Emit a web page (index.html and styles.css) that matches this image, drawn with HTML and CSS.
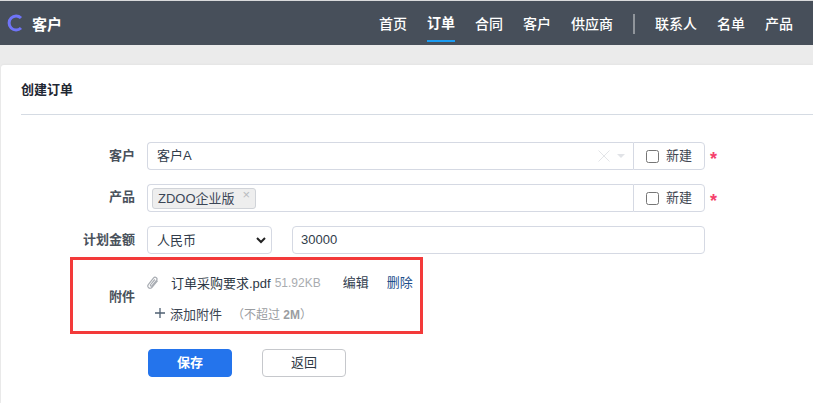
FILE: index.html
```html
<!DOCTYPE html>
<html lang="zh">
<head>
<meta charset="utf-8">
<title>创建订单</title>
<link rel="stylesheet" href="styles.css">
</head>
<body>
<header class="navbar">
  <div class="brand">
    <svg class="logo" width="16" height="18" viewBox="0 0 16 18"><path d="M14 4A7 7 0 1 0 14 14" fill="none" stroke="#6f74f8" stroke-width="3"/></svg>
    <span class="brand-name">客户</span>
  </div>
  <nav class="nav">
    <a class="nav-item">首页</a>
    <a class="nav-item active">订单</a>
    <a class="nav-item">合同</a>
    <a class="nav-item">客户</a>
    <a class="nav-item">供应商</a>
    <span class="nav-divider"></span>
    <a class="nav-item">联系人</a>
    <a class="nav-item">名单</a>
    <a class="nav-item">产品</a>
  </nav>
</header>
<main class="content">
  <section class="card">
    <h1 class="card-title">创建订单</h1>
    <form class="form">
      <div class="row">
        <label class="label">客户</label>
        <div class="group">
          <div class="field grow">
            <span class="value">客户A</span>
            <svg class="clear" width="12" height="12" viewBox="0 0 12 12"><path d="M0.5 0.5L11.5 11.5M11.5 0.5L0.5 11.5" stroke="#e3e5e8" stroke-width="1"/></svg>
            <span class="caret"></span>
          </div>
          <label class="addon"><span class="check"></span><span class="addon-text">新建</span></label>
        </div>
        <span class="star">*</span>
      </div>
      <div class="row">
        <label class="label label-up">产品</label>
        <div class="group">
          <div class="field grow tags">
            <span class="tag">ZDOO企业版<span class="tag-x">×</span></span>
          </div>
          <label class="addon"><span class="check"></span><span class="addon-text">新建</span></label>
        </div>
        <span class="star">*</span>
      </div>
      <div class="row">
        <label class="label">计划金额</label>
        <div class="money">
          <div class="field select">
            <span class="value value-select">人民币</span>
            <svg width="10" height="7" viewBox="0 0 10 7"><path d="M1 1L5 5L9 1" fill="none" stroke="#222" stroke-width="2"/></svg>
          </div>
          <div class="field amount"><span class="value-num">30000</span></div>
        </div>
      </div>
      <div class="attach-row">
        <label class="attach-label">附件</label>
        <div class="attach-body">
          <div class="file">
            <svg class="clip" width="12" height="14" viewBox="0 0 12 14"><path d="M10.6 4.6L5.2 11.2C4.2 12.5 2.6 12.6 1.6 11.7C0.6 10.8 0.6 9.4 1.5 8.3L6.4 2.2C7.2 1.2 8.4 1 9.3 1.7C10.2 2.4 10.2 3.5 9.5 4.4L5.1 9.7C4.7 10.2 4.1 10.2 3.7 9.9C3.3 9.5 3.3 9 3.7 8.5L7.8 3.5" fill="none" stroke="#a9adb3" stroke-width="1.2"/></svg>
            <span class="file-name">订单采购要求.pdf</span>
            <span class="file-size">51.92KB</span>
            <a class="file-act edit">编辑</a>
            <a class="file-act del">删除</a>
          </div>
          <div class="add">
            <svg width="10" height="10" viewBox="0 0 10 10"><path d="M5 0V10M0 5H10" stroke="#4f6072" stroke-width="1.3"/></svg>
            <span class="add-text">添加附件</span>
            <span class="hint">（不超过 <b>2M</b>）</span>
          </div>
        </div>
      </div>
      <div class="actions">
        <button type="button" class="btn primary">保存</button>
        <button type="button" class="btn">返回</button>
      </div>
    </form>
  </section>
</main>
</body>
</html>
```
FILE: styles.css
```css
* { box-sizing: border-box; }
html, body { height: 100%; }
body {
  margin: 0;
  height: 403px;
  overflow: hidden;
  background: #ebebeb;
  border-top: 1px solid #d9dadb;
  font-family: "Liberation Sans", "Noto Sans CJK SC", sans-serif;
  font-size: 13px;
  color: #313c52;
}
.navbar {
  height: 44px;
  background: #474f5a;
  display: flex;
  align-items: center;
  justify-content: space-between;
  padding: 0 20px 0 7px;
}
.brand { display: flex; align-items: center; gap: 9px; }
.logo { display: block; flex: none; margin-top: -1px; }
.brand-name { color: #fff; font-size: 15px; font-weight: 700; }
.nav { display: flex; align-items: center; gap: 20px; height: 100%; }
.nav-item {
  height: 100%;
  display: flex;
  align-items: center;
  color: #fff;
  font-size: 14px;
  font-weight: 500;
  border-bottom: 2px solid transparent;
  border-top: 2px solid transparent;
  padding-top: 0;
}
.nav-item.active { font-weight: 700; border-bottom-color: #1b9cf2; height: 28px; margin-top: 10px; padding-bottom: 10px; border-top: 0; }
.nav-divider { width: 2px; height: 20px; background: #90959b; margin-top: 2px; }
.content { padding: 20px 0 0 1px; height: 358px; }
.card {
  height: 100%;
  background: #fff;
  border-radius: 3px 0 0 0;
  padding: 0 0 0 20px;
  box-shadow: 0 -1px 2px rgba(0,0,0,.03);
}
.card-title {
  margin: 0 0 27px;
  height: 50px;
  padding-top: 1px;
  line-height: 48px;
  font-size: 13px;
  font-weight: 700;
  color: #1f2733;
  border-bottom: 1px solid #d5dbe3;
}
.form { display: flex; flex-direction: column; }
.row { display: flex; align-items: center; height: 28px; margin-bottom: 14px; }
.label {
  width: 114px;
  margin-right: 12px;
  padding-bottom: 3px;
  text-align: right;
  font-weight: 700;
  color: #4a525c;
}
.label-up { padding-bottom: 5px; }
.group { display: flex; width: 558px; height: 28px; }
.field {
  height: 28px;
  display: flex;
  align-items: center;
  background: #fff;
  border: 1px solid #d5d9e3;
  border-radius: 4px;
  padding: 0 9px;
  color: #313c4a;
}
.grow { flex: 1; border-radius: 4px 0 0 4px; border-right: 0; }
.value { font-size: 13px; flex: 1; padding-bottom: 3px; }
.value-select { padding-bottom: 1px; }
.clear { margin-right: 7px; }
.caret { width: 0; height: 0; border: 4px solid transparent; border-top: 4px solid #e1e3e7; border-bottom: 0; margin-right: -1px; }
.tags { padding: 0 4px; }
.tag {
  height: 21px;
  display: inline-flex;
  align-items: center;
  padding: 0 5px 2px;
  font-size: 13px;
  color: #3b4656;
  background: #eeeeee;
  border: 1px solid #d0d3d8;
  border-radius: 3px;
}
.tag-x { margin-left: 8px; margin-top: -5px; color: #b8bbc0; font-size: 13px; }
.addon {
  width: 72px;
  display: flex;
  align-items: center;
  padding-left: 12px;
  border: 1px solid #d5d9e3;
  border-radius: 0 4px 4px 0;
  gap: 7px;
  color: #3f4752;
}
.addon-text { padding-bottom: 3px; }
.check { width: 13px; height: 13px; border: 1px solid #767676; border-radius: 2.5px; background: #fff; }
.star { margin-left: 5px; color: #f5406c; font-size: 18px; font-weight: 700; line-height: 28px; padding-top: 5px; }
.money { display: flex; gap: 20px; }
.select { width: 125px; justify-content: space-between; padding-right: 5px; }
.amount { width: 413px; padding: 0 8px; }
.value-num { font-size: 13px; padding-bottom: 1px; }
.attach-row {
  display: flex;
  align-items: center;
  width: 353px;
  height: 77px;
  margin: -11px 0 15px 49px;
  border: 3px solid #f33a3a;
}
.attach-label { width: 62px; margin-right: 12px; text-align: right; font-weight: 700; color: #4a525c; }
.attach-body { flex: 1; display: flex; flex-direction: column; padding-top: 4px; }
.file { display: flex; align-items: center; height: 22px; margin-bottom: 9px; }
.clip { margin-right: 12px; margin-top: 2px; }
.file-name { color: #2d3845; }
.file-size { margin-left: 4px; padding-top: 1px; color: #a9acb0; font-size: 12px; }
.file-act { color: #33404f; padding-bottom: 2px; }
.edit { margin-left: 22px; }
.del { margin-left: 18px; color: #1d4f8c; }
.add { display: flex; align-items: center; height: 22px; padding-left: 8px; }
.add-text { margin-left: 5px; color: #3a4452; }
.hint { margin-left: 10px; color: #9a9da1; font-size: 12px; }
.hint b { font-weight: 700; }
.actions { display: flex; gap: 30px; margin-left: 127px; }
.btn {
  width: 84px;
  height: 28px;
  padding: 0 0 3px;
  background: #fff;
  border: 1px solid #c6c8cc;
  border-radius: 4px;
  font: inherit;
  color: #2f3945;
}
.btn.primary { background: #2474ec; border-color: #2474ec; color: #fff; font-weight: 700; }
```
